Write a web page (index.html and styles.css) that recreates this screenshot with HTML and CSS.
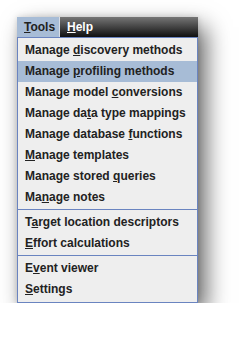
FILE: index.html
```html
<!DOCTYPE html>
<html lang="en">
<head>
    <meta charset="UTF-8">
    <title>Tools menu</title>
    <link rel="stylesheet" href="styles.css">
</head>
<body>

    <div class="window">
        <!-- menu bar -->
        <div class="menubar">
            <span class="menu-tab selected"><u>T</u>ools</span>
            <span class="menu-tab"><u>H</u>elp</span>
        </div>

        <!-- dropdown -->
        <div class="popup">
            <div class="item">Manage <u>d</u>iscovery methods</div>
            <div class="item active">Manage <u>p</u>rofiling methods</div>
            <div class="item">Manage model <u>c</u>onversions</div>
            <div class="item">Manage da<u>t</u>a type mappings</div>
            <div class="item">Manage database <u>f</u>unctions</div>
            <div class="item"><u>M</u>anage templates</div>
            <div class="item">Manage stored <u>q</u>ueries</div>
            <div class="item">Ma<u>n</u>age notes</div>
            <div class="sep"></div>
            <div class="item">T<u>a</u>rget location descriptors</div>
            <div class="item"><u>E</u>ffort calculations</div>
            <div class="sep"></div>
            <div class="item">E<u>v</u>ent viewer</div>
            <div class="item"><u>S</u>ettings</div>
        </div>
    </div>

</body>
</html>
```

FILE: styles.css
```css
body {
    margin: 0;
    padding: 17px 0 0 17px;
    background-color: #fff;
    font-family: 'Liberation Sans', Arial, sans-serif;
    font-size: 12px;
    font-weight: bold;
}

.window {
    width: 181px;
    box-shadow: 8px 10px 22px rgba(0, 0, 0, 0.6), 0 0 6px rgba(0, 0, 0, 0.15);
}

.menubar {
    display: flex;
    height: 20px;
    background: linear-gradient(#767676, #101010); /* dark bar */
}

.menu-tab {
    line-height: 20px;
    padding: 0 7px;
    color: #fff;
}

.menu-tab.selected {
    width: 28px;
    background-color: #a7bcd6;
    color: #222;
    border-right: 1px solid #d8dde6;
}

.popup {
    background-color: #eeeeee;
    border: 1px solid #6a84c0;
    padding: 2px 0;
}

.item {
    height: 21px;
    line-height: 21px;
    padding-left: 7px;
    color: #222;
    white-space: nowrap;
}

.item.active {
    background-color: #a7bcd6;
}

.sep {
    height: 1px;
    margin: 1px 0 2px;
    background-color: #6a84c0;
}
```
